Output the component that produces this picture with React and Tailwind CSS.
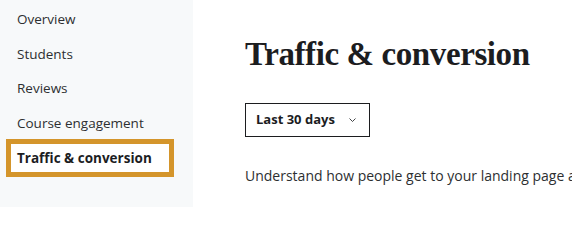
import React from 'react';

const items = ['Overview', 'Students', 'Reviews', 'Course engagement'];

const App = () => {
    return (
        <div className='flex h-[207px] w-[572px] overflow-hidden bg-white' style={{ fontFamily: '"Open Sans", "Noto Sans", sans-serif' }}>
            <div className='w-[193px] shrink-0 bg-[#f7f9fa] pt-[2px]'>
                {items.map((item) => (
                    <div key={item} className='flex h-[34.5px] items-center pl-[17px] text-[13.5px] text-[#2d2f31]'>
                        {item}
                    </div>
                ))}
                <div className='ml-[6px] -mt-[1px] flex h-[38px] w-[168px] items-center border-[5px] border-[#d4952b] bg-white pl-[6px] text-[13.5px] font-bold text-[#1c1d1f]'>
                    Traffic &amp; conversion
                </div>
            </div>
            <div className='min-w-0 flex-1 pl-[52px] pt-[35px]'>
                <h1 className='whitespace-nowrap text-[33px] font-bold leading-[38px] tracking-[-0.4px] text-[#1c1d1f]' style={{ fontFamily: '"Liberation Serif", "DejaVu Serif", serif' }}>
                    Traffic &amp; conversion
                </h1>
                <button className='mt-[30px] flex h-[34px] w-[125px] items-center justify-between border border-[#1c1d1f] pl-[10px] pr-[13px] text-[13px] font-bold text-[#1c1d1f]'>
                    Last 30 days
                    <svg width='7' height='4' viewBox='0 0 7 4' fill='none' stroke='#2d2f31' strokeWidth='0.9'>
                        <path d='M0.5 0.5l3 3 3-3' />
                    </svg>
                </button>
                <p className='mt-[28px] whitespace-nowrap text-[14px] text-[#2d2f31]'>
                    Understand how people get to your landing page and make a purchase decision.
                </p>
            </div>
        </div>
    );
};

export default App;
